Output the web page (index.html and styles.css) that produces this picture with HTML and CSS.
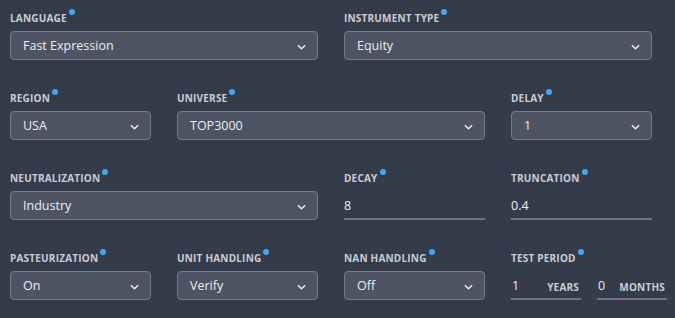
FILE: index.html
```html
<!DOCTYPE html>
<html lang="en">
  <head>
    <meta charset="utf-8" />
    <meta name="viewport" content="width=device-width, initial-scale=1" />
    <title>Simulation Settings</title>
    <link rel="stylesheet" href="styles.css">
  </head>
  <body>
    <div class="settings">

      <div class="field span-2">
        <label class="field-label">Language</label>
        <div class="select"><span>Fast Expression</span><svg class="chev" viewBox="0 0 10 6"><polyline points="1,1 5,5 9,1"/></svg></div>
      </div>
      <div class="field span-2">
        <label class="field-label">Instrument Type</label>
        <div class="select"><span>Equity</span><svg class="chev" viewBox="0 0 10 6"><polyline points="1,1 5,5 9,1"/></svg></div>
      </div>

      <div class="field">
        <label class="field-label">Region</label>
        <div class="select"><span>USA</span><svg class="chev" viewBox="0 0 10 6"><polyline points="1,1 5,5 9,1"/></svg></div>
      </div>
      <div class="field span-2">
        <label class="field-label">Universe</label>
        <div class="select"><span>TOP3000</span><svg class="chev" viewBox="0 0 10 6"><polyline points="1,1 5,5 9,1"/></svg></div>
      </div>
      <div class="field">
        <label class="field-label">Delay</label>
        <div class="select"><span>1</span><svg class="chev" viewBox="0 0 10 6"><polyline points="1,1 5,5 9,1"/></svg></div>
      </div>

      <div class="field span-2">
        <label class="field-label">Neutralization</label>
        <div class="select"><span>Industry</span><svg class="chev" viewBox="0 0 10 6"><polyline points="1,1 5,5 9,1"/></svg></div>
      </div>
      <div class="field">
        <label class="field-label">Decay</label>
        <div class="line-input"><span>8</span></div>
      </div>
      <div class="field">
        <label class="field-label">Truncation</label>
        <div class="line-input"><span>0.4</span></div>
      </div>

      <div class="field">
        <label class="field-label">Pasteurization</label>
        <div class="select"><span>On</span><svg class="chev" viewBox="0 0 10 6"><polyline points="1,1 5,5 9,1"/></svg></div>
      </div>
      <div class="field">
        <label class="field-label">Unit Handling</label>
        <div class="select"><span>Verify</span><svg class="chev" viewBox="0 0 10 6"><polyline points="1,1 5,5 9,1"/></svg></div>
      </div>
      <div class="field">
        <label class="field-label">NaN Handling</label>
        <div class="select"><span>Off</span><svg class="chev" viewBox="0 0 10 6"><polyline points="1,1 5,5 9,1"/></svg></div>
      </div>
      <div class="field">
        <label class="field-label">Test Period</label>
        <div class="period">
          <div class="line-input unit"><span>1</span><em>Years</em></div>
          <div class="line-input unit"><span>0</span><em>Months</em></div>
        </div>
      </div>

    </div>
  </body>
</html>
```

FILE: styles.css
```css
body {
     margin: 0;
     background: #343c4c;
     font-family: "Open Sans", "Noto Sans", sans-serif;
     color: #eceef2;
}

.settings {
     display: grid;
     grid-template-columns: repeat(4, 141px);
     column-gap: 26px;
     row-gap: 29px;
     padding: 9px 0 0 10px;
}

.span-2 {
     grid-column: span 2;
}

.field {
     display: flex;
     flex-direction: column;
     min-width: 0;
}

.field-label {
     display: block;
     height: 14px;
     line-height: 14px;
     margin-bottom: 8px;
     font-size: 10px;
     font-weight: 700;
     letter-spacing: 0.2px;
     text-transform: uppercase;
     color: #c9ccd3;
     white-space: nowrap;
}

.field-label::after {
     content: "";
     display: inline-block;
     width: 6px;
     height: 6px;
     margin-left: 2px;
     border-radius: 50%;
     background: #3ea8f5;
     vertical-align: 7px;
}

.select {
     height: 29px;
     box-sizing: border-box;
     display: flex;
     align-items: center;
     justify-content: space-between;
     padding: 0 11px 0 12px;
     background: #4e5464;
     border: 1px solid #767b86;
     border-radius: 4px;
     font-size: 12.5px;
}

.chev {
     width: 9px;
     height: 6px;
     margin-top: 2px;
     fill: none;
     stroke: #eceef2;
     stroke-width: 1.6;
}

.line-input {
     height: 29px;
     box-sizing: border-box;
     display: flex;
     align-items: center;
     justify-content: space-between;
     border-bottom: 2px solid #6f7480;
     font-size: 12.5px;
     padding-top: 2px;
}

.period {
     display: flex;
     gap: 16px;
}

.line-input.unit {
     width: 70px;
     flex: none;
     padding-left: 1px;
     padding-right: 2px;
}

.line-input em {
     font-style: normal;
     font-size: 10px;
     font-weight: 700;
     letter-spacing: 0.2px;
     text-transform: uppercase;
     color: #c9ccd3;
     margin-top: 2px;
}
```
